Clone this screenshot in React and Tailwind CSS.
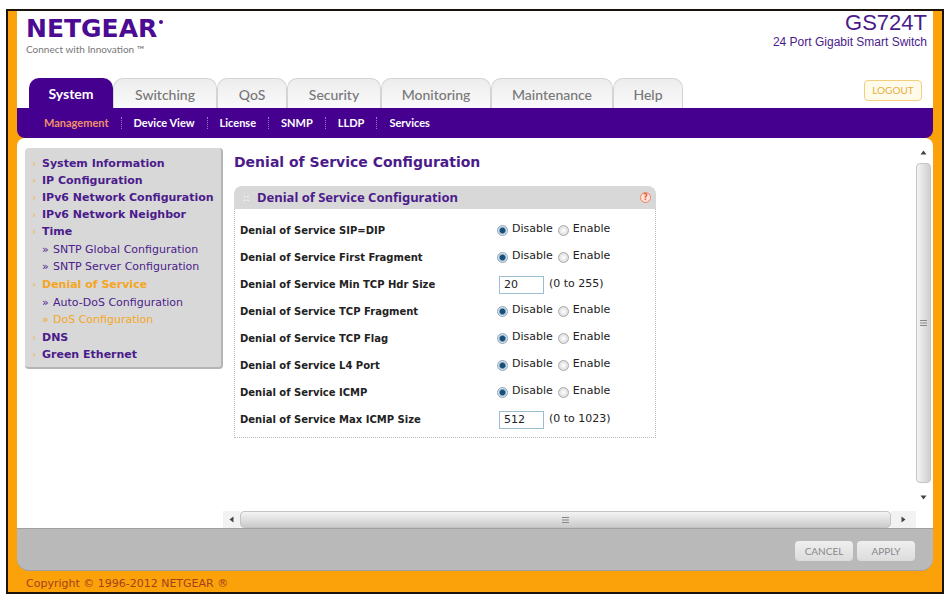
import React, { useState } from "react";

const tabs = [
  { name: "System", width: "w-[84px]" },
  { name: "Switching", width: "w-[104px]" },
  { name: "QoS", width: "w-[70px]" },
  { name: "Security", width: "w-[94px]" },
  { name: "Monitoring", width: "w-[110px]" },
  { name: "Maintenance", width: "w-[122px]" },
  { name: "Help", width: "w-[70px]" },
];

const subTabs = [
  "Management",
  "Device View",
  "License",
  "SNMP",
  "LLDP",
  "Services",
];

const menu = [
  { name: "System Information" },
  { name: "IP Configuration" },
  { name: "IPv6 Network Configuration" },
  { name: "IPv6 Network Neighbor" },
  {
    name: "Time",
    children: ["SNTP Global Configuration", "SNTP Server Configuration"],
  },
  {
    name: "Denial of Service",
    children: ["Auto-DoS Configuration", "DoS Configuration"],
  },
  { name: "DNS" },
  { name: "Green Ethernet" },
];

const fields = [
  { id: "sipdip", label: "Denial of Service SIP=DIP" },
  { id: "firstFragment", label: "Denial of Service First Fragment" },
  {
    id: "minTcpHdr",
    label: "Denial of Service Min TCP Hdr Size",
    value: "20",
    range: "(0 to 255)",
  },
  { id: "tcpFragment", label: "Denial of Service TCP Fragment" },
  { id: "tcpFlag", label: "Denial of Service TCP Flag" },
  { id: "l4Port", label: "Denial of Service L4 Port" },
  { id: "icmp", label: "Denial of Service ICMP" },
  {
    id: "maxIcmp",
    label: "Denial of Service Max ICMP Size",
    value: "512",
    range: "(0 to 1023)",
  },
];

const Header = () => {
  return (
    <header className="bg-white">
      <div className="flex h-[67px] justify-between pl-[9px] pr-[6px]">
        <div className="pt-1 font-['Lato',sans-serif]">
          <div className="flex items-start font-['DejaVu_Sans',sans-serif] text-[25px] leading-7 font-bold text-[#4b0b93]">
            NETGEAR
            <span className="mt-[5px] ml-0.5 h-1 w-1 rounded-full bg-[#4b0b93]" />
          </div>
          <div className="text-[10px] leading-3 text-[#777]">
            Connect with Innovation ™
          </div>
        </div>
        <div className="text-right font-['Liberation_Sans',sans-serif] text-[#4b1b8b]">
          <div className="text-[22px] leading-6">GS724T</div>
          <div className="text-xs leading-[14px]">
            24 Port Gigabit Smart Switch
          </div>
        </div>
      </div>
      <div className="flex items-start justify-between pl-3 pr-[11px]">
        <nav className="flex font-['Lato',sans-serif]">
          {tabs.map((tab, index) => (
            <a
              key={tab.name}
              href="#"
              className={`${tab.width} h-[30px] rounded-t-[10px] text-center text-sm leading-[31px] ${
                index === 0
                  ? "bg-[#45008f] font-bold text-white"
                  : "border-t border-r border-l border-[#d4d4d4] bg-linear-to-b from-[#ededed] to-[#fafafa] font-medium text-[#777]"
              }`}
            >
              {tab.name}
            </a>
          ))}
        </nav>
        <button className="mt-0.5 h-[21px] w-[58px] rounded border border-[#f3cf7c] bg-[#fffbea] font-['Lato',sans-serif] text-[10px] text-[#e5ae3c]">
          LOGOUT
        </button>
      </div>
    </header>
  );
};

const SubNav = () => {
  return (
    <nav className="flex h-[30px] items-center rounded-b-lg bg-[#45008f] pl-[15px] font-['Lato',sans-serif] text-[11px] font-bold text-white">
      {subTabs.map((item, index) => (
        <a
          key={item}
          href="#"
          className={`px-3 leading-3 ${
            index === 0
              ? "text-[#f0906a]"
              : "border-l border-dotted border-[#9a78c4]"
          }`}
        >
          {item}
        </a>
      ))}
    </nav>
  );
};

const Sidebar = () => {
  return (
    <aside className="mt-[10px] ml-2 w-[198px] shrink-0 self-start rounded-sm border-r-2 border-b-2 border-[#b4b4b4] bg-[#d8d8d8] pt-[7px] pb-1 pl-[7px] text-[11px] leading-[17px] whitespace-nowrap text-[#4b1b8b]">
      <ul>
        {menu.map((item) => {
          const active = item.name === "Denial of Service";
          return (
            <li key={item.name}>
              <a
                href="#"
                className={`flex font-bold ${active ? "text-[#f5a623]" : ""}`}
              >
                <span className="w-[10px] font-normal text-[#efb765]">›</span>
                {item.name}
              </a>
              {item.children && (
                <ul className="py-px pl-[10px]">
                  {item.children.map((child) => (
                    <li key={child}>
                      <a
                        href="#"
                        className={`flex ${
                          child === "DoS Configuration" ? "text-[#f5a623]" : ""
                        }`}
                      >
                        <span className="w-[11px]">»</span>
                        {child}
                      </a>
                    </li>
                  ))}
                </ul>
              )}
            </li>
          );
        })}
      </ul>
    </aside>
  );
};

const Radio = ({ name, label, checked, onChange }) => {
  return (
    <label className="flex items-center gap-1">
      <input
        type="radio"
        name={name}
        checked={checked}
        onChange={onChange}
        className="mt-0.5 h-[11px] w-[11px] appearance-none rounded-full border border-[#aaa] bg-radial from-[#fff] to-[#d2d2d2] checked:border-[#8fa5b8] checked:from-[#16507c] checked:from-35% checked:to-[#d3e2ec] checked:to-60%"
      />
      {label}
    </label>
  );
};

const FieldRow = ({ field }) => {
  const [enabled, setEnabled] = useState(false);
  const [value, setValue] = useState(field.value);

  if (field.range) {
    return (
      <div className="flex h-[27px] items-center">
        <label htmlFor={field.id} className="w-[257px] font-bold">
          {field.label}
        </label>
        <div className="flex items-center gap-[5px] pl-0.5 text-[11px]">
          <input
            id={field.id}
            type="text"
            value={value}
            onChange={(e) => setValue(e.target.value)}
            className="h-[18px] w-[45px] border border-[#9dbdd0] bg-white pl-1"
          />
          <span>{field.range}</span>
        </div>
      </div>
    );
  }

  return (
    <fieldset className="flex h-[27px] items-center">
      <legend className="float-left w-[257px] font-bold">{field.label}</legend>
      <div className="mb-0.5 flex gap-[5px] text-[11px]">
        <Radio
          name={field.id}
          label="Disable"
          checked={!enabled}
          onChange={() => setEnabled(false)}
        />
        <Radio
          name={field.id}
          label="Enable"
          checked={enabled}
          onChange={() => setEnabled(true)}
        />
      </div>
    </fieldset>
  );
};

const Grip = () => (
  <svg width="7" height="6" viewBox="0 0 7 6" stroke="#888">
    <path d="M0 .5h7M0 3h7M0 5.5h7" />
  </svg>
);

const Arrow = ({ className }) => (
  <svg
    width="7"
    height="5"
    viewBox="0 0 7 5"
    fill="#444"
    className={className}
  >
    <path d="M3.500 .5 6.500 4.500h-6z" />
  </svg>
);

const App = () => {
  return (
    <div className="flex min-h-screen bg-white pt-[9px] pr-0.5 pb-px pl-[6px] font-['DejaVu_Sans',sans-serif]">
      <div className="flex flex-1 flex-col border-2 border-[#1c120c] bg-[#fba10a] px-[9px]">
        <Header />
        <SubNav />
        <div className="flex flex-1 rounded-t-lg bg-white">
          <Sidebar />
          <div className="flex min-w-0 flex-1 flex-col">
            <div className="flex flex-1">
              <main className="min-w-0 flex-1 pt-[14px] pl-[11px]">
                <h1 className="text-sm leading-5 font-bold text-[#4b1b8b]">
                  Denial of Service Configuration
                </h1>
                <section className="mt-[14px] max-w-[422px]">
                  <div className="flex h-[23px] items-center rounded-t-lg bg-[#d8d8d8] pr-[5px] pl-[9px]">
                    <span className="w-[14px] text-[10px] text-white">::</span>
                    <h2 className="flex-1 font-['Noto_Sans',sans-serif] text-[13px] font-bold text-[#4b1b8b]">
                      Denial of Service Configuration
                    </h2>
                    <button
                      aria-label="Help"
                      className="flex h-[11px] w-[11px] items-center justify-center rounded-full border border-[#ee8266] bg-[#fbe3d8] text-[8px] leading-none font-bold text-[#e2603f]"
                    >
                      ?
                    </button>
                  </div>
                  <form className="border border-t-0 border-dotted border-[#bbb] pt-2 pb-1 pl-[5px] text-[10px] text-[#222]">
                    {fields.map((field) => (
                      <FieldRow key={field.id} field={field} />
                    ))}
                  </form>
                </section>
              </main>
              <div className="flex w-[15px] shrink-0 flex-col items-center">
                <div className="flex h-[25px] items-center pt-1">
                  <Arrow />
                </div>
                <div className="flex w-full flex-1 items-center justify-center rounded-sm border border-[#c4c4c4] bg-linear-to-r from-[#f4f4f4] to-[#d0cfd2]">
                  <Grip />
                </div>
                <div className="flex h-[28px] items-center">
                  <Arrow className="rotate-180" />
                </div>
              </div>
              <div className="w-0.5 shrink-0" />
            </div>
            <div className="flex h-[17px] pr-[17px]">
              <div className="flex w-[17px] items-center justify-center bg-[#f2f2f2]">
                <Arrow className="-rotate-90" />
              </div>
              <div className="flex flex-1 items-center justify-center rounded-sm border border-[#c4c4c4] bg-linear-to-b from-[#f4f4f4] to-[#cbcbcb]">
                <Grip />
              </div>
              <div className="flex w-[25px] items-center justify-center bg-[#f2f2f2]">
                <Arrow className="rotate-90" />
              </div>
            </div>
          </div>
        </div>
        <footer>
          <div className="flex h-[43px] items-start justify-end gap-1 rounded-b-xl border-t border-b border-[#a0a0a0] bg-[#b9b9b9] pt-3 pr-[18px] font-['Lato',sans-serif] text-[10px] text-[#888]">
            <button className="h-5 w-[58px] rounded-sm bg-linear-to-b from-[#efefef] to-[#dcdcdc]">
              CANCEL
            </button>
            <button className="h-5 w-[58px] rounded-sm bg-linear-to-b from-[#efefef] to-[#dcdcdc]">
              APPLY
            </button>
          </div>
          <div className="h-[21px] pt-[5px] pl-[9px] text-[11px] leading-4 text-[#a5421a]">
            Copyright © 1996-2012 NETGEAR ®
          </div>
        </footer>
      </div>
    </div>
  );
};

export default App;
